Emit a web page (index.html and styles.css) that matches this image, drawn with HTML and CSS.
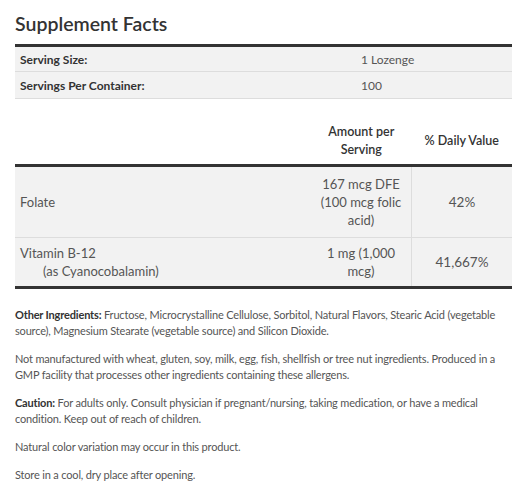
FILE: index.html
```html
<!DOCTYPE html>
<html>
<head>
<meta charset="utf-8">
<link rel="stylesheet" href="styles.css">
</head>
<body>
<div class="facts">
  <h2 class="title">Supplement Facts</h2>
  <table class="serving">
    <tr class="s1"><th>Serving Size:</th><td>1 Lozenge</td></tr>
    <tr class="s2"><th>Servings Per Container:</th><td>100</td></tr>
  </table>
  <table class="nutrients">
    <thead>
      <tr><th class="name"></th><th class="amt">Amount per Serving</th><th class="dv">% Daily Value</th></tr>
    </thead>
    <tbody>
      <tr class="r1"><td class="name">Folate</td><td class="amt">167 mcg DFE (100 mcg folic acid)</td><td class="dv">42%</td></tr>
      <tr class="r2"><td class="name">Vitamin B-12<span class="sub">(as Cyanocobalamin)</span></td><td class="amt">1 mg (1,000 mcg)</td><td class="dv">41,667%</td></tr>
    </tbody>
  </table>
  <div class="notes">
    <p><b>Other Ingredients:</b> Fructose, Microcrystalline Cellulose, Sorbitol, Natural Flavors, Stearic Acid (vegetable source), Magnesium Stearate (vegetable source) and Silicon Dioxide.</p>
    <p>Not manufactured with wheat, gluten, soy, milk, egg, fish, shellfish or tree nut ingredients. Produced in a GMP facility that processes other ingredients containing these allergens.</p>
    <p><b>Caution:</b> For adults only. Consult physician if pregnant/nursing, taking medication, or have a medical condition. Keep out of reach of children.</p>
    <p>Natural color variation may occur in this product.</p>
    <p>Store in a cool, dry place after opening.</p>
  </div>
</div>
</body>
</html>
```
FILE: styles.css
```css
html, body { margin: 0; padding: 0; background: #fff; }
body { font-family: Lato, "Open Sans", sans-serif; color: #555; }
.facts { padding: 12px 15px 0 15px; width: 497px; }
.title { margin: 0 0 8px 0; font-size: 19.5px; font-weight: 600; color: #333; line-height: 24px; }
table { border-collapse: collapse; width: 100%; }
.serving { border-top: 3px solid #333; font-size: 12px; }
.serving th, .serving td { background: #f2f2f2; border-bottom: 1px solid #ddd; padding: 0 5px; text-align: left; }
.serving .s1 { height: 26px; }
.serving .s2 { height: 27px; }
.serving th { font-weight: 700; color: #333; width: 331px; }
.serving td { color: #555; }
.nutrients { font-size: 13px; border-bottom: 3px solid #333; }
.nutrients thead tr { height: 66px; }
.nutrients thead th { font-size: 12.5px; font-weight: 600; color: #333; line-height: 18px; border-bottom: 3px solid #333; padding: 0 5px 5px 5px; vertical-align: bottom; }
.nutrients thead th.dv { padding: 0 5px 14px 5px; }
.nutrients .name { text-align: left; }
.nutrients .amt { width: 90px; text-align: center; }
.nutrients .dv { width: 90px; text-align: center; }
.nutrients tbody td { background: #f2f2f2; line-height: 18px; padding: 7px 5px; vertical-align: middle; }
.nutrients tbody td.dv { border-left: 1px solid #ddd; font-size: 13.5px; }
.nutrients tbody tr.r1 td { border-bottom: 1px solid #ddd; padding: 8px 5px; }
.nutrients tbody tr.r2 td { padding: 6px 5px; }
.sub { display: block; padding-left: 23px; }
.notes { padding-top: 18px; font-size: 11px; letter-spacing: -0.17px; line-height: 16px; color: #555; }
.notes p { margin: 0 0 12px 0; }
.notes b { color: #333; font-weight: 700; }
```
